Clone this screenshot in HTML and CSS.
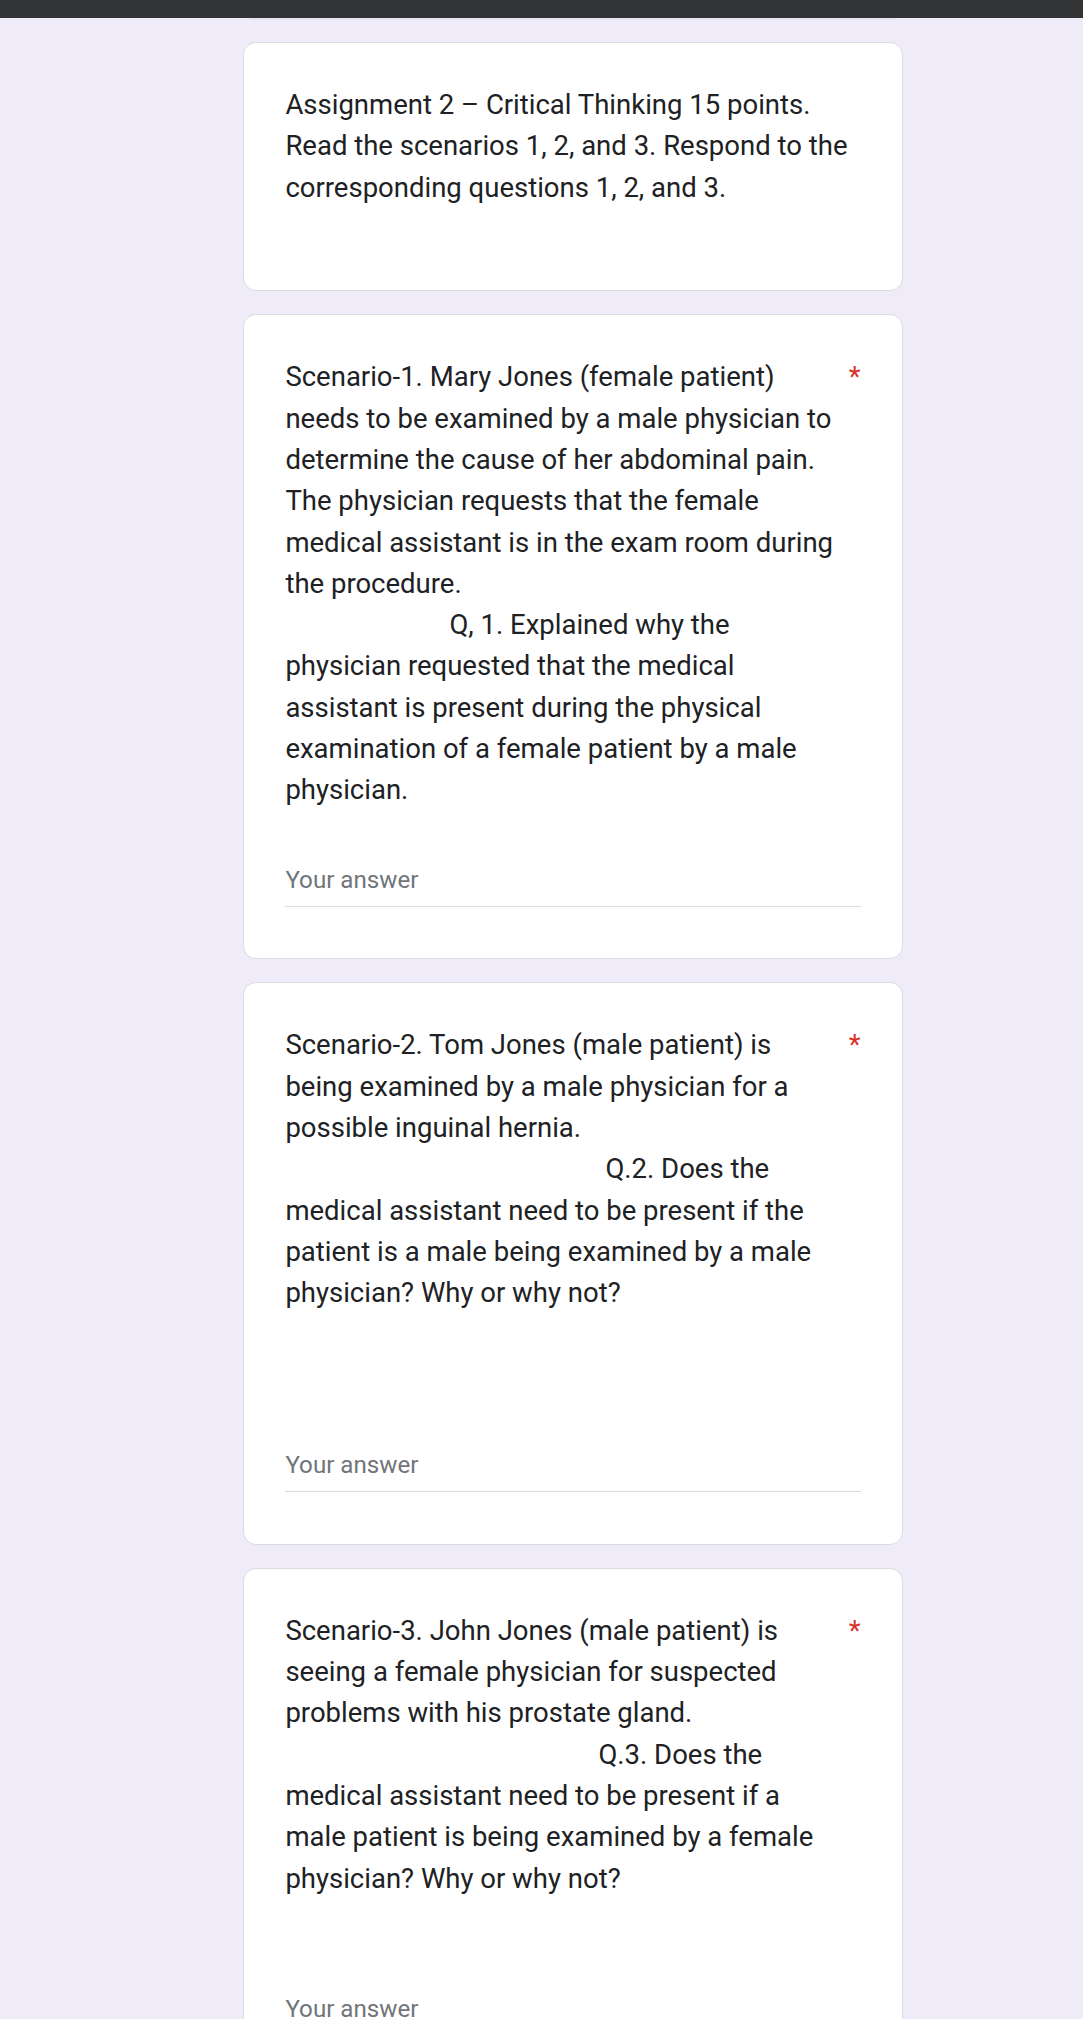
FILE: index.html
```html
<!DOCTYPE html>
<html lang="en">
<head>
<meta charset="utf-8">
<title>Assignment 2 – Critical Thinking</title>
<link rel="stylesheet" href="styles.css">
</head>
<body>
<div class="topbar"></div>
<div class="prev-edge"></div>
<main class="form">
  <section class="card card-header">
    <div class="q-text">Assignment 2 – Critical Thinking 15 points.<br>Read the scenarios 1, 2, and 3. Respond to the<br>corresponding questions 1, 2, and 3.</div>
  </section>

  <section class="card">
    <div class="title-row">
      <div class="q-text">Scenario-1. Mary Jones (female patient)<br>needs to be examined by a male physician to<br>determine the cause of her abdominal pain.<br>The physician requests that the female<br>medical assistant is in the exam room during<br>the procedure.<br><span class="ind ind-1">Q, 1. Explained why the</span><br>physician requested that the medical<br>assistant is present during the physical<br>examination of a female patient by a male<br>physician.</div>
      <span class="req">*</span>
    </div>
    <div class="answer">Your answer</div>
  </section>

  <section class="card">
    <div class="title-row">
      <div class="q-text">Scenario-2. Tom Jones (male patient) is<br>being examined by a male physician for a<br>possible inguinal hernia.<br><span class="ind ind-2">Q.2. Does the</span><br>medical assistant need to be present if the<br>patient is a male being examined by a male<br>physician? Why or why not?<br>&nbsp;<br>&nbsp;</div>
      <span class="req">*</span>
    </div>
    <div class="answer">Your answer</div>
  </section>

  <section class="card">
    <div class="title-row">
      <div class="q-text">Scenario-3. John Jones (male patient) is<br>seeing a female physician for suspected<br>problems with his prostate gland.<br><span class="ind ind-3">Q.3. Does the</span><br>medical assistant need to be present if a<br>male patient is being examined by a female<br>physician? Why or why not?<br>&nbsp;</div>
      <span class="req">*</span>
    </div>
    <div class="answer">Your answer</div>
  </section>
</main>
</body>
</html>
```

FILE: styles.css
```css
* {
  box-sizing: border-box;
}

html, body {
  margin: 0;
  padding: 0;
}

body {
  background: #f0ebf8;
  font-family: Roboto, "Liberation Sans", Arial, sans-serif;
  color: #202124;
  min-height: 2019px;
}

.topbar {
  height: 18px;
  background: #323335;
}

.prev-edge {
  margin-left: 250px;
  width: 646px;
  height: 2px;
  background: #e7e3ef;
}

.form {
  display: flex;
  flex-direction: column;
  gap: 23px;
  width: 660px;
  margin-left: 243px;
  padding-top: 22px;
}

.card {
  background: #ffffff;
  border: 1px solid #dadce0;
  border-radius: 13px;
  padding: 41px 41.4px 51.5px;
}

.card-header {
  padding-bottom: 82.5px;
}

.q-text {
  font-size: 27.5px;
  line-height: 41.3px;
  color: #202124;
}

.title-row {
  display: flex;
  align-items: flex-start;
}

.title-row .q-text {
  flex: 1;
}

.req {
  font-size: 27.5px;
  line-height: 41.3px;
  color: #d93025;
  margin-left: 8px;
}

.ind {
  display: inline-block;
}

.ind-1 {
  padding-left: 164px;
}

.ind-2 {
  padding-left: 320px;
}

.ind-3 {
  padding-left: 313px;
}

.answer {
  margin-top: 51px;
  font-size: 24.15px;
  line-height: 36.2px;
  color: #70757a;
  padding-bottom: 8px;
  border-bottom: 1px solid #dadce0;
}
```
